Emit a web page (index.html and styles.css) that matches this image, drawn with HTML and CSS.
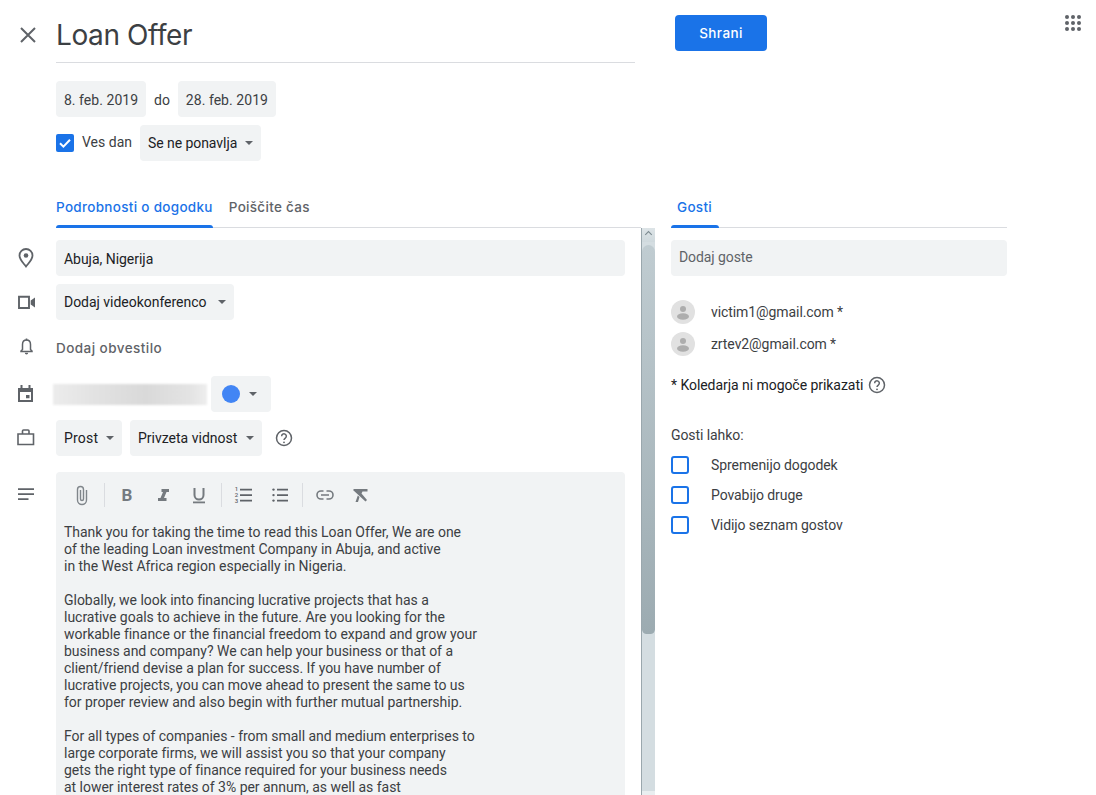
FILE: index.html
```html
<!DOCTYPE html>
<html lang="sl">
<head>
<meta charset="utf-8">
<title>Loan Offer</title>
<link rel="stylesheet" href="styles.css">
</head>
<body>
<div class="app">
  <header class="top">
    <div class="rail rail-close">
      <svg class="ico" viewBox="0 0 24 24"><path d="M5 5l14 14M19 5L5 19" fill="none" stroke="#5f6368" stroke-width="2"/></svg>
    </div>
    <div class="title-col">
      <h1 class="title">Loan Offer</h1>
      <div class="dates">
        <span class="chip date d-start">8. feb. 2019</span>
        <span class="do">do</span>
        <span class="chip date d-end">28. feb. 2019</span>
      </div>
      <div class="allday">
        <span class="check"><svg viewBox="0 0 18 18" width="18" height="18"><path d="M4 9.3l3.4 3.3L14 5.8" fill="none" stroke="#fff" stroke-width="2"/></svg></span>
        <span class="allday-label">Ves dan</span>
        <span class="chip dark w-repeat">Se ne ponavlja<i class="caret"></i></span>
      </div>
    </div>
    <button class="save">Shrani</button>
    <div class="apps">
      <svg viewBox="0 0 16 16" width="16" height="16" fill="#5f6368"><circle cx="2" cy="2" r="2"/><circle cx="8" cy="2" r="2"/><circle cx="14" cy="2" r="2"/><circle cx="2" cy="8" r="2"/><circle cx="8" cy="8" r="2"/><circle cx="14" cy="8" r="2"/><circle cx="2" cy="14" r="2"/><circle cx="8" cy="14" r="2"/><circle cx="14" cy="14" r="2"/></svg>
    </div>
  </header>

  <main class="columns">
    <section class="left">
      <nav class="tabs left-tabs">
        <span class="tab active">Podrobnosti o dogodku</span>
        <span class="tab">Poiščite čas</span>
      </nav>
      <div class="pane">
        <div class="form">
          <div class="row r-loc">
            <div class="rail"><svg class="ico" viewBox="0 0 24 24"><path d="M12 3a6.500 6.500 0 0 0-6.500 6.500c0 4.300 4.300 8 6.500 11 2.200-3 6.500-6.700 6.500-11A6.500 6.500 0 0 0 12 3z" fill="none" stroke="#5f6368" stroke-width="1.800"/><circle cx="12" cy="9.500" r="2.300" fill="#5f6368"/></svg></div>
            <div class="field dark loc-field">Abuja, Nigerija</div>
          </div>
          <div class="row r-video">
            <div class="rail"><svg class="ico" viewBox="0 0 24 24"><path d="M5 6.700h10v11.300H5z" fill="none" stroke="#5f6368" stroke-width="1.900"/><path d="M16.700 10.500L21 7.500v10l-4.300-3z" fill="#5f6368"/></svg></div>
            <span class="chip dark w-video">Dodaj videokonferenco<i class="caret"></i></span>
          </div>
          <div class="row r-bell">
            <div class="rail"><svg class="ico" viewBox="0 0 24 24"><path d="M12.500 6c-2.600 0-4 2-4 4.500v5L7 17v.5h11V17l-1.500-1.500v-5c0-2.500-1.400-4.500-4-4.500z" fill="none" stroke="#5f6368" stroke-width="1.500"/><path d="M10.800 18.800h3.400a1.700 1.700 0 0 1-3.400 0zM11.700 4.500h1.600v2h-1.600z" fill="#5f6368"/></svg></div>
            <span class="link">Dodaj obvestilo</span>
          </div>
          <div class="row r-cal">
            <div class="rail"><svg class="ico" viewBox="0 0 24 24"><path d="M5 7h13v12H5z" fill="none" stroke="#5f6368" stroke-width="2"/><path d="M4 6h15v4H4zM6.500 3h2v4h-2zM14.500 3h2v4h-2zM12 13h3.500v3.200H12z" fill="#5f6368"/></svg></div>
            <div class="blurred"></div>
            <span class="chip colour"><i class="dot"></i><i class="caret c-colour"></i></span>
          </div>
          <div class="row r-busy">
            <div class="rail"><svg class="ico" viewBox="0 0 24 24"><path d="M4 8h15.500v10.500H4zM8.500 8V5a1 1 0 0 1 1-1h4.500a1 1 0 0 1 1 1v3" fill="none" stroke="#5f6368" stroke-width="1.600"/></svg></div>
            <span class="chip dark w-busy">Prost<i class="caret"></i></span>
            <span class="chip dark w-vis">Privzeta vidnost<i class="caret"></i></span>
            <svg class="ico help" viewBox="0 0 24 24"><circle cx="12" cy="12" r="9" fill="none" stroke="#5f6368" stroke-width="1.800"/><path d="M9.200 9.800a2.800 2.800 0 1 1 4.500 2.200c-1 .8-1.700 1.300-1.700 2.500" fill="none" stroke="#5f6368" stroke-width="1.800"/><circle cx="12" cy="17.200" r="1.100" fill="#5f6368"/></svg>
          </div>
          <div class="row r-desc">
            <div class="rail"><svg class="ico" viewBox="0 0 24 24"><path d="M4 5.300h16v1.600H4zM4 10.300h16v1.600H4zM4 15.300h10.500v1.600H4z" fill="#5f6368"/></svg></div>
            <div class="editor">
              <div class="toolbar">
                <svg class="tool" viewBox="0 0 24 24"><path d="M16.500 7v10a4.500 4.500 0 0 1-9 0V6.500a3 3 0 0 1 6 0V16a1.500 1.500 0 0 1-3 0V7" fill="none" stroke="#80868b" stroke-width="1.400"/></svg>
                <i class="sep"></i>
                <svg class="tool" viewBox="0 0 24 24"><text class="t-glyph" x="12" y="18" text-anchor="middle">B</text></svg>
                <svg class="tool" viewBox="0 0 24 24"><path d="M10.500 6h7.500v3h-2.500l-2.500 6h2.500v3H7v-3h2.500l2.500-6h-1.500z" fill="#757a7f"/></svg>
                <svg class="tool" viewBox="0 0 24 24"><path d="M7.500 5v7a4.500 4.500 0 0 0 9 0V5" fill="none" stroke="#757a7f" stroke-width="2"/><path d="M6 18.500h12v1.800H6z" fill="#757a7f"/></svg>
                <i class="sep"></i>
                <svg class="tool t-num" viewBox="0 0 24 24"><path d="M9 5.800h12v1.600H9zM9 11.300h12v1.600H9zM9 16.800h12v1.600H9z" fill="#5f6368"/><text class="t-digit" x="5.500" y="8">1</text><text class="t-digit" x="5.500" y="14">2</text><text class="t-digit" x="5.500" y="20">3</text></svg>
                <svg class="tool" viewBox="0 0 24 24"><path d="M9 5.800h11v1.600H9zM9 11.300h11v1.600H9zM9 16.800h11v1.600H9z" fill="#5f6368"/><circle cx="5.500" cy="6.600" r="1.200" fill="#5f6368"/><circle cx="5.500" cy="12.100" r="1.200" fill="#5f6368"/><circle cx="5.500" cy="17.600" r="1.200" fill="#5f6368"/></svg>
                <i class="sep"></i>
                <svg class="tool" viewBox="0 0 24 24"><path d="M10.500 8H8a4 4 0 0 0 0 8h2.500M13.500 8H16a4 4 0 0 1 0 8h-2.500M8 12h8" fill="none" stroke="#757a7f" stroke-width="1.600"/></svg>
                <svg class="tool" viewBox="0 0 24 24"><path d="M5 6h13.500v2.500h-5l-1 2 5.500 6.500-1.500 1.500L4 7l1-1zM10.500 14L9 19H6.500l2.300-6.500z" fill="#757a7f"/></svg>
              </div>
              <div class="body-text">
                <p>Thank you for taking the time to read this Loan Offer, We are one<br>of the leading Loan investment Company in Abuja, and active<br>in the West Africa region especially in Nigeria.</p>
                <p>Globally, we look into financing lucrative projects that has a<br>lucrative goals to achieve in the future. Are you looking for the<br>workable finance or the financial freedom to expand and grow your<br>business and company? We can help your business or that of a<br>client/friend devise a plan for success. If you have number of<br>lucrative projects, you can move ahead to present the same to us<br>for proper review and also begin with further mutual partnership.</p>
                <p>For all types of companies - from small and medium enterprises to<br>large corporate firms, we will assist you so that your company<br>gets the right type of finance required for your business needs<br>at lower interest rates of 3% per annum, as well as fast</p>
              </div>
            </div>
          </div>
        </div>
        <div class="scrollbar">
          <div class="sb-arrow"><svg viewBox="0 0 14 10" width="14" height="10"><path d="M3.500 7L7 3.500 10.500 7" fill="none" stroke="#7d8b91" stroke-width="1.200"/></svg></div>
          <div class="sb-thumb"></div>
          <div class="sb-end"></div>
        </div>
      </div>
    </section>

    <aside class="right">
      <nav class="tabs right-tabs">
        <span class="tab active guests-tab">Gosti</span>
      </nav>
      <div class="field add-guest">Dodaj goste</div>
      <ul class="guests">
        <li class="guest"><span class="avatar"><svg viewBox="0 0 24 24" width="24" height="24"><circle cx="12" cy="9" r="3" fill="#adadad"/><ellipse cx="12" cy="16.500" rx="6" ry="3.200" fill="#adadad"/></svg></span>victim1@gmail.com *</li>
        <li class="guest"><span class="avatar"><svg viewBox="0 0 24 24" width="24" height="24"><circle cx="12" cy="9" r="3" fill="#adadad"/><ellipse cx="12" cy="16.500" rx="6" ry="3.200" fill="#adadad"/></svg></span>zrtev2@gmail.com *</li>
      </ul>
      <div class="note">* Koledarja ni mogoče prikazati
        <svg class="ico note-help" viewBox="0 0 24 24"><circle cx="12" cy="12" r="9" fill="none" stroke="#5f6368" stroke-width="1.800"/><path d="M9.200 9.800a2.800 2.800 0 1 1 4.500 2.200c-1 .8-1.700 1.300-1.700 2.500" fill="none" stroke="#5f6368" stroke-width="1.800"/><circle cx="12" cy="17.200" r="1.100" fill="#5f6368"/></svg>
      </div>
      <div class="perm-head">Gosti lahko:</div>
      <ul class="perms">
        <li class="perm"><i class="box"></i>Spremenijo dogodek</li>
        <li class="perm"><i class="box"></i>Povabijo druge</li>
        <li class="perm"><i class="box"></i>Vidijo seznam gostov</li>
      </ul>
    </aside>
  </main>
</div>
</body>
</html>
```
FILE: styles.css
```css
* { box-sizing: border-box; }
html, body { margin: 0; height: 100%; overflow: hidden; background: #fff; }
body { font: 14px/20px Roboto, "Liberation Sans", sans-serif; color: #3c4043; }
ul { list-style: none; margin: 0; padding: 0; }
i { display: block; font-style: normal; }
p { margin: 0 0 17px; }

.app { width: 1096px; height: 795px; overflow: hidden; display: flex; flex-direction: column; }

.top { display: flex; align-items: flex-start; height: 181px; flex: none; }
.rail { width: 56px; flex: none; display: flex; padding-left: 14px; }
.rail-close { padding: 23px 0 0 16px; }
.ico { width: 24px; height: 24px; flex: none; display: block; }
.title-col { width: 579px; flex: none; }
.title { margin: 0; height: 63px; padding: 15px 0 0; border-bottom: 1px solid #dadce0; font: 400 28px/40px Inter, Roboto, sans-serif; letter-spacing: -.4px; color: #3c4043; }
.dates { display: flex; align-items: center; margin-top: 18px; }
.chip { display: inline-flex; align-items: center; justify-content: space-between; height: 36px; padding: 0 8px; background: #f1f3f4; border-radius: 4px; white-space: nowrap; flex: none; }
.date { padding-top: 2px; justify-content: center; letter-spacing: .05px; }
.d-start { width: 90px; }
.d-end { width: 98px; }
.dark { color: #202124; }
.do { margin: 0 8px; padding-top: 2px; }
.allday { display: flex; align-items: center; margin-top: 8px; }
.check { width: 18px; height: 18px; border-radius: 2px; background: #1a73e8; display: block; flex: none; }
.check svg { display: block; }
.allday-label { margin-left: 8px; margin-right: 8px; position: relative; top: -1px; }
.caret { width: 0; height: 0; border-left: 4px solid transparent; border-right: 4px solid transparent; border-top: 4px solid #5f6368; flex: none; }
.w-repeat { width: 121px; letter-spacing: -.06px; }
.w-video { width: 178px; letter-spacing: -.03px; }
.w-busy { width: 66px; letter-spacing: .2px; }
.w-vis { width: 132px; }
.save { width: 92px; height: 36px; margin: 15px 0 0 40px; border: 0; border-radius: 4px; background: #1a73e8; color: #fff; font: 500 13.500px/36px Inter, Roboto, sans-serif; letter-spacing: .4px; padding: 0; flex: none; }
.apps { margin: 15px 0 0 298px; flex: none; }
.apps svg { display: block; }

.columns { display: flex; flex: 1; min-height: 0; }
.left { width: 655px; flex: none; display: flex; flex-direction: column; min-height: 0; }
.tabs { display: flex; height: 47px; flex: none; border-bottom: 1px solid #dadce0; gap: 16px; }
.left-tabs { margin-left: 56px; width: 585px; }
.tab { position: relative; padding-top: 16px; font: 500 13.500px/20px Inter, Roboto, sans-serif; letter-spacing: .3px; color: #5f6368; white-space: nowrap; }
.tab.active { color: #1a73e8; }
.tab.active::after { content: ""; position: absolute; left: 0; right: 0; bottom: -1px; height: 3px; background: #1a73e8; border-radius: 3px 3px 0 0; }
.pane { flex: 1; min-height: 0; display: flex; overflow: hidden; }
.form { width: 641px; flex: none; padding: 12px 16px 0 0; }
.row { display: flex; align-items: center; }
.r-video { margin-top: 8px; }
.r-bell { margin-top: 8px; height: 36px; }
.r-cal { margin-top: 12px; height: 36px; }
.r-busy { margin-top: 8px; gap: 8px; }
.r-busy .rail { margin-right: -8px; }
.r-desc { margin-top: 16px; align-items: flex-start; }
.r-desc > .rail { padding-top: 11px; }
.field { height: 36px; flex: 1; background: #f1f3f4; border-radius: 4px; padding: 0 8px; display: flex; align-items: center; }
.loc-field { padding-top: 2px; letter-spacing: -.03px; }
.link { padding-top: 4px; font: 500 13.500px/20px Inter, Roboto, sans-serif; letter-spacing: .45px; color: #5f6368; }
.blurred { width: 154px; height: 21px; margin-left: -3px; background: linear-gradient(90deg, #ececec, #e3e3e3 25%, #d9d9d9 60%, #e4e4e4 90%, #eeeeee); filter: blur(1px); }
.colour { width: 60px; margin-left: 4px; padding: 0 0 0 11px; justify-content: flex-start; }
.dot { width: 18px; height: 18px; border-radius: 50%; background: #4285f4; }
.c-colour { margin-left: 9px; }
.help { margin-left: 4px; width: 20px; height: 20px; }
.editor { flex: 1; background: #f1f3f4; border-radius: 4px; padding: 0 8px; height: 500px; }
.toolbar { display: flex; align-items: center; height: 46px; padding-left: 6px; gap: 12px; }
.tool { width: 24px; height: 24px; flex: none; }
.t-num { margin-left: -1px; margin-right: 1px; }
.t-glyph { font: 700 17px Roboto, sans-serif; fill: #757a7f; }
.t-digit { font: 500 6px Roboto, sans-serif; fill: #5f6368; text-anchor: middle; }
.sep { width: 1px; height: 24px; background: #dadce0; flex: none; margin: 0 -2px; }
.body-text { padding-top: 6px; font-size: 14px; line-height: 17px; letter-spacing: -.025px; color: #3c4043; white-space: nowrap; }
.scrollbar { width: 14px; flex: none; background: #d4dde1; border-left: 1px solid #9aa7ad; display: flex; flex-direction: column; }
.sb-arrow { height: 14px; flex: none; display: flex; background: linear-gradient(180deg, #dde4e7, #cfd9dd); }
.sb-thumb { height: 389px; flex: none; margin-top: 3px; border-radius: 7px 7px 5px 5px; background: linear-gradient(180deg, #c0ccd1, #9cabb1); }
.sb-end { height: 4px; flex: none; margin-top: auto; background: #e9eef0; }

.right { width: 336px; margin-left: 16px; flex: none; letter-spacing: -.08px; }
.right-tabs { display: flex; }
.guests-tab { padding: 16px 7px 0 6px; }
.add-guest { flex: none; margin-top: 12px; padding-bottom: 2px; color: #5f6368; }
.guests { margin-top: 20px; }
.guest { display: flex; align-items: center; height: 32px; }
.avatar { width: 24px; height: 24px; border-radius: 50%; background: #e1e1e1; margin-right: 16px; flex: none; }
.avatar svg { display: block; }
.note { display: flex; align-items: center; margin-top: 15px; height: 20px; color: #202124; letter-spacing: -.05px; }
.note-help { width: 20px; height: 20px; margin-left: 4px; }
.perm-head { margin-top: 30px; }
.perms { margin-top: 5px; }
.perm { display: flex; align-items: center; height: 30px; }
.box { width: 18px; height: 18px; border: 2px solid #1a73e8; border-radius: 3px; margin-right: 22px; flex: none; }
```
